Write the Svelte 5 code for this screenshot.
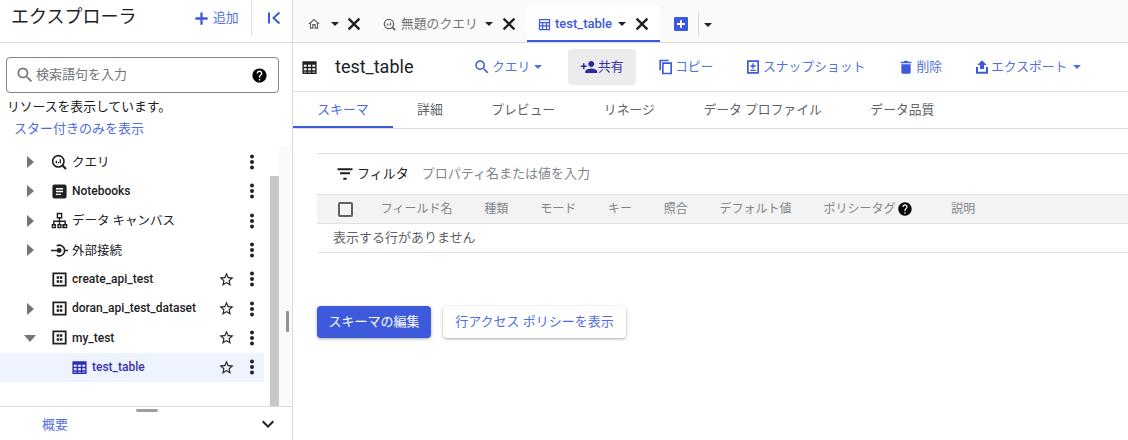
<script>
  const P = {
    search: 'M15.5 14h-.79l-.28-.27A6.471 6.471 0 0 0 16 9.5 6.5 6.5 0 1 0 9.5 16c1.61 0 3.09-.59 4.23-1.57l.27.28v.79l5 4.99L20.49 19l-4.99-5zm-6 0C7.01 14 5 11.99 5 9.5S7.01 5 9.5 5 14 7.01 14 9.5 11.99 14 9.5 14z',
    help: 'M12 2C6.48 2 2 6.48 2 12s4.48 10 10 10 10-4.48 10-10S17.52 2 12 2zm1 17h-2v-2h2v2zm2.07-7.75l-.9.92C13.45 12.9 13 13.5 13 15h-2v-.5c0-1.1.45-2.1 1.17-2.83l1.24-1.26c.37-.36.59-.86.59-1.41 0-1.1-.9-2-2-2s-2 .9-2 2H8c0-2.21 1.79-4 4-4s4 1.79 4 4c0 .88-.36 1.68-.93 2.25z',
    star: 'M22 9.24l-7.19-.62L12 2 9.19 8.63 2 9.24l5.46 4.73L5.82 21 12 17.27 18.18 21l-1.63-7.03L22 9.24zM12 15.4l-3.76 2.27 1-4.28-3.32-2.88 4.38-.38L12 6.1l1.71 4.04 4.38.38-3.32 2.88 1 4.28L12 15.4z',
    close: 'M19.500 6.500L17.500 4.500 12 10 6.500 4.500 4.500 6.500 10 12 4.500 17.500 6.500 19.500 12 14 17.500 19.500 19.500 17.500 14 12z',
    home: 'M12 5.69l5 4.5V18h-2v-6H9v6H7v-7.81l5-4.5M12 3L2 12h3v8h6v-6h2v6h6v-8h3L12 3z',
    share: 'M15 12c2.21 0 4-1.79 4-4s-1.79-4-4-4-4 1.79-4 4 1.79 4 4 4zm-9-2V7H4v3H1v2h3v3h2v-3h3v-2H6zm9 4c-2.67 0-8 1.34-8 4v2h16v-2c0-2.66-5.33-4-8-4z',
    copy: 'M16 1H2v16h2.500V3.500H16V1zm5 4H6v18h15V5zm-2.500 15.500h-10v-13h10v13z',
    snap: 'M3 2h18v20H3V2zm2.500 2.500v15h13v-15h-13zM11 6.500h2V9.500h3v2h-3v3h-2v-3H8v-2h3v-3zM8 16h8v2H8v-2z',
    trash: 'M5 8h14v12c0 1.1-.9 2-2 2H7c-1.1 0-2-.9-2-2V8zM4 4h5l1-1.500h4L15 4h5v2.500H4V4z',
    upload: 'M9 15h6V9h4l-7-7-7 7h4zM3 22V12h3v7h12v-7h3v10z',
    filter: 'M10 19h4v-2.500h-4V19zM3 5v2.500h18V5H3zm3 7.300h12v-2.500H6v2.500z',
    chevron: 'M16.59 8.59L12 13.17 7.41 8.59 6 10l6 6 6-6z',
    add: 'M19 13.300h-5.700V19h-2.600v-5.700H5v-2.600h5.700V5h2.600v5.700H19v2.600z',
    table: 'M2 3h20v18H2V3zm2 5v3h4V8H4zm6 0v3h4V8h-4zm6 0v3h4V8h-4zM4 13v3h4v-3H4zm6 0v3h4v-3h-4zm6 0v3h4v-3h-4z M4 18v1h4v-1H4zm6 0v1h4v-1h-4zm6 0v1h4v-1h-4z',
    tableLine: 'M3 3h18v18H3V3zm2 2v3h14V5H5zm0 5v3h3v-3H5zm5 0v3h4v-3h-4zm6 0v3h3v-3h-3zM5 15v4h3v-4H5zm5 0v4h4v-4h-4zm6 0v4h3v-4h-3z',
    notebook: 'M5 2h14a3 3 0 0 1 3 3v14a3 3 0 0 1-3 3H5a3 3 0 0 1-3-3V5a3 3 0 0 1 3-3zm2 5v2h10V7H7zm0 4v2h10v-2H7zm0 4v2h7v-2H7z',
    canvas: 'M8 1h8v8h-3v3h8v5h2v6h-7v-6h3v-3h-6v3h2v6H9v-6h2v-3H5v3h2v6H1v-6h2v-5h8V9H8V1zm2 2v4h4V3h-4zM3 19v2h2v-2H3zm8 0v2h2v-2h-2zm8 0v2h2v-2h-2z',
    dataset: 'M2 2h20v20H2V2zm2.500 2.500v15h15v-15h-15zM8 7.500h3.500V11H8V7.500zm4.500 0H16V11h-3.500V7.500zM8 13h3.500v3.500H8V13zm4.500 0H16v3.500h-3.500V13z'
  };
  const tree = [
    { name: 'クエリ', kind: 'query', arrow: 'right' },
    { name: 'Notebooks', icon: 'notebook', arrow: 'right' },
    { name: 'データ キャンバス', icon: 'canvas', arrow: 'right' },
    { name: '外部接続', kind: 'conn', arrow: 'right' },
    { name: 'create_api_test', icon: 'dataset', star: true },
    { name: 'doran_api_test_dataset', icon: 'dataset', star: true, arrow: 'right' },
    { name: 'my_test', icon: 'dataset', star: true, arrow: 'down' },
    { name: 'test_table', icon: 'table', star: true, child: true, selected: true }
  ];
  const actions = [
    { label: 'コピー', icon: 'copy', w: 'copy' },
    { label: 'スナップショット', icon: 'snap', w: 'snap' },
    { label: '削除', icon: 'trash', w: 'del' },
    { label: 'エクスポート', icon: 'upload', w: 'exp', caret: true }
  ];
  const subtabs = ['スキーマ', '詳細', 'プレビュー', 'リネージ', 'データ プロファイル', 'データ品質'];
  const cols = ['フィールド名', '種類', 'モード', 'キー', '照合', 'デフォルト値'];
</script>

{#snippet ic(name, size)}
  <svg class="ic" width={size} height={size} viewBox="0 0 24 24" fill="currentColor"><path fill-rule="evenodd" d={P[name]} /></svg>
{/snippet}
{#snippet queryIcon(size)}
  <svg class="ic" width={size} height={size} viewBox="0 0 24 24" fill="none" stroke="currentColor" stroke-width="2.400">
    <circle cx="11" cy="11" r="8.500" /><path d="M17 17l5.500 5.500" stroke-width="3.200" /><path d="M8 10v4M11 12v2M14 8v6" stroke-width="2" />
  </svg>
{/snippet}
{#snippet connIcon(size)}
  <svg class="ic" width={size} height={size} viewBox="0 0 24 24" fill="none" stroke="currentColor" stroke-width="2.200">
    <path d="M0 12h11M19 12h5M8 5.500a7.500 7.500 0 1 1 0 13" /><circle cx="11.500" cy="12" r="3.400" fill="currentColor" stroke="none" />
  </svg>
{/snippet}
{#snippet caret()}
  <span class="caret"></span>
{/snippet}
{#snippet dots()}
  <svg class="dots" width="6" height="16" viewBox="0 0 6 16" fill="currentColor"><circle cx="3" cy="2.500" r="2" /><circle cx="3" cy="8" r="2" /><circle cx="3" cy="13.500" r="2" /></svg>
{/snippet}

<div class="page">
  <aside class="side">
    <header class="side-head">
      <h1>エクスプローラ</h1>
      <button class="add">{@render ic('add', 21)}<span>追加</span></button>
      <span class="side-div"></span>
      <svg class="collapse" width="14" height="14" viewBox="0 0 14 14" fill="none" stroke="currentColor" stroke-width="2"><path d="M2 1.500v11M12.500 1.500L6.500 7l6 5.500" /></svg>
    </header>
    <div class="search">
      <span class="s-ic">{@render ic('search', 20)}</span>
      <span class="s-ph">検索語句を入力</span>
      <span class="black">{@render ic('help', 17)}</span>
    </div>
    <p class="note">リソースを表示しています。</p>
    <p class="starred">スター付きのみを表示</p>
    <div class="tree-wrap">
      <div class="tree">
        {#each tree as r}
          <div class="row" class:sel={r.selected} class:child={r.child}>
            <span class="arrow {r.arrow ?? ''}"></span>
            <span class="t-ic">
              {#if r.kind === 'query'}{@render queryIcon(16)}{:else if r.kind === 'conn'}{@render connIcon(17)}{:else}{@render ic(r.icon, 17)}{/if}
            </span>
            <span class="t-name">{r.name}</span>
            <span class="t-star">{#if r.star}{@render ic('star', 17)}{/if}</span>
            <span class="t-more">{@render dots()}</span>
          </div>
        {/each}
      </div>
      <div class="vbar"><span class="vthumb"></span></div>
      <div class="gutter"><span class="gthumb"></span></div>
    </div>
    <footer class="side-foot">
      <span class="grip"></span>
      <span class="foot-label">概要</span>
      {@render ic('chevron', 24)}
    </footer>
  </aside>

  <main class="main">
    <nav class="tabs">
      <div class="tab home">
        <span class="gray">{@render ic('home', 14)}</span>{@render caret()}<span class="x">{@render ic('close', 20)}</span>
      </div>
      <div class="tab query">
        <span class="gray">{@render queryIcon(13)}</span><span class="tab-t">無題のクエリ</span>{@render caret()}<span class="x">{@render ic('close', 20)}</span>
      </div>
      <div class="tab active">
        {@render ic('tableLine', 15)}<span class="tab-t">test_table</span>{@render caret()}<span class="x">{@render ic('close', 20)}</span>
      </div>
      <span class="newtab"><svg width="14" height="14" viewBox="0 0 14 14"><rect width="14" height="14" rx="1" fill="#3c5adb" /><path d="M6 3h2v3h3v2H8v3H6V8H3V6h3z" fill="#fff" /></svg></span>
      <span class="tabs-div"></span>
      {@render caret()}
    </nav>

    <section class="bar">
      <span class="bar-ic">{@render ic('table', 17)}</span>
      <h2>test_table</h2>
      <button class="act q">{@render ic('search', 18)}<span>クエリ</span>{@render caret()}</button>
      <button class="act share">{@render ic('share', 18)}<span>共有</span></button>
      {#each actions as a}
        <button class="act {a.w}">{@render ic(a.icon, 16)}<span>{a.label}</span>{#if a.caret}{@render caret()}{/if}</button>
      {/each}
    </section>

    <nav class="subtabs">
      {#each subtabs as t, i}
        <span class="sub" class:on={i === 0}>{t}</span>
      {/each}
    </nav>

    <section class="content">
      <div class="filter">
        {@render ic('filter', 20)}
        <span class="f-l">フィルタ</span>
        <span class="f-p">プロパティ名または値を入力</span>
      </div>
      <div class="thead">
        <span class="cb"></span>
        {#each cols as c}<span>{c}</span>{/each}
        <span class="pol">ポリシータグ {@render ic('help', 16)}</span>
        <span>説明</span>
      </div>
      <div class="empty">表示する行がありません</div>
      <div class="btns">
        <button class="btn pri">スキーマの編集</button>
        <button class="btn sec">行アクセス ポリシーを表示</button>
      </div>
    </section>
  </main>
</div>

<style>
  :global(body) { margin: 0; background: #fff; }
  * { box-sizing: border-box; }
  .page {
    display: flex; width: 1128px; height: 440px; overflow: hidden;
    font: 12.800px/1.2 Roboto, "Noto Sans CJK JP", sans-serif; color: #202124;
  }
  button { font: inherit; border: 0; background: none; padding: 0; display: flex; align-items: center; }
  h1, h2, p { margin: 0; font-weight: 400; }
  .ic { display: block; flex: none; }
  .black { color: #000; }

  .side { width: 293px; height: 440px; flex: none; display: flex; flex-direction: column; border-right: 1px solid #dadce0; }
  .side-head { height: 43px; flex: none; display: flex; align-items: flex-start; padding: 0 0 0 11px; border-bottom: 1px solid #dadce0; }
  .side-head h1 { font-size: 18px; line-height: 34px; width: 180px; color: #202124; }
  .add { color: #3c5adb; height: 36px; gap: 1px; margin-left: 0; width: 60px; }
  .add span { color: #5470de; }
  .side-div { width: 1px; height: 36px; background: #e0e0e0; }
  .collapse { color: #3c5adb; margin: 11px 0 0 15px; }

  .search { margin: 14px 13px 0 6px; height: 36px; flex: none; border: 1px solid #80868b; border-radius: 4px; display: flex; align-items: center; padding: 0 10px 0 8px; font-size: 13px; }
  .s-ic { color: #70757a; }
  .s-ph { flex: 1; margin-left: 1px; color: #70757a; }
  .note { margin: 5px 0 0 7px; line-height: 17px; color: #202124; }
  .starred { margin: 5px 0 0 14px; line-height: 17px; color: #4f6ddf; font-size: 13px; }

  .tree-wrap { flex: 1; min-height: 0; display: flex; margin-top: 10px; }
  .tree { width: 270px; flex: none; padding-top: 0.500px; }
  .row { height: 29.300px; width: 264px; display: flex; align-items: center; font-weight: 500; font-size: 12px; color: #202124; }
  .row.sel { background: #edf4fe; color: #3730b0; }
  .row.sel .t-ic { color: #2f2fb5; }
  .row.sel .t-star, .row.sel .t-more { color: #202124; }
  .arrow { width: 51px; flex: none; height: 12px; position: relative; }
  .arrow.right::before { content: ''; position: absolute; left: 27px; top: 0; border-left: 7px solid #757575; border-top: 6px solid transparent; border-bottom: 6px solid transparent; }
  .arrow.down::before { content: ''; position: absolute; left: 24px; top: 3px; border-top: 7px solid #757575; border-left: 6.500px solid transparent; border-right: 6.500px solid transparent; }
  .row.child .arrow { width: 71px; }
  .t-ic { width: 21px; flex: none; }
  .t-name { flex: 1; min-width: 0; white-space: nowrap; }
  .row:nth-child(1) .t-name, .row:nth-child(3) .t-name, .row:nth-child(4) .t-name { font-weight: 400; font-size: 12.500px; }
  .t-star { width: 17px; flex: none; margin-right: 14px; }
  .t-more { width: 6px; flex: none; margin-right: 9px; }
  .dots { display: block; }
  .vbar { width: 9px; flex: none; padding-top: 29px; }
  .vthumb { display: block; height: 100%; background: #c8c8c8; }
  .gutter { flex: 1; background: #fafafa; padding: 164px 0 0 7px; }
  .gthumb { display: block; width: 3px; height: 21px; background: #8f9499; border-radius: 1px; }

  .side-foot { height: 34px; flex: none; border-top: 1px solid #dadce0; display: flex; align-items: center; padding: 0 12px 0 42px; position: relative; }
  .grip { position: absolute; left: 136px; top: 2px; width: 22px; height: 3px; background: #9aa0a6; border-radius: 2px; }
  .foot-label { flex: 1; color: #5470de; padding-top: 2px; font-size: 13px; }

  .main { flex: 1; min-width: 0; display: flex; flex-direction: column; }
  .tabs { height: 43px; flex: none; display: flex; align-items: flex-end; background: #fafafa; border-bottom: 1px solid #dadce0; padding-left: 14px; }
  .tab { height: 36px; display: flex; align-items: center; flex: none; }
  .gray { color: #5f6368; }
  .tab .x { color: #202124; }
  .tab-t { margin-left: 5px; }
  .tab .caret { border-top-color: #202124; }
  .home { width: 61px; }
  .home .caret { margin-left: 10px; }
  .home .x { margin-left: 5px; }
  .query { width: 159px; padding-left: 15px; color: #757575; }
  .query .caret { margin-left: 7px; }
  .query .x { margin-left: 6px; }
  .active { width: 133px; padding: 2px 0 0 10px; background: #fff; border-radius: 4px 4px 0 0; color: #3c5adb; border-bottom: 2px solid #3c5adb; }
  .active .tab-t { font-weight: 500; font-size: 13px; margin-left: 3px; }
  .active .caret { margin-left: 6px; }
  .active .x { margin-left: 6px; }
  .newtab { margin: 0 0 11px 14px; height: 14px; }
  .tabs-div { width: 1px; height: 24px; background: #dadce0; margin: 0 5px 6px 10px; }
  .tabs > .caret { margin-bottom: 15px; border-top-color: #202124; }
  .caret { display: block; flex: none; width: 0; height: 0; border-top: 4px solid currentColor; border-left: 4px solid transparent; border-right: 4px solid transparent; }

  .bar { height: 49px; flex: none; display: flex; align-items: center; border-bottom: 1px solid #dadce0; padding-left: 8px; }
  .bar-ic { width: 34px; color: #202124; }
  .bar h2 { font-size: 18px; width: 138px; color: #202124; }
  .act { height: 36px; color: #3c5adb; gap: 2px; flex: none; }
  .act span { color: #5470de; }
  .q { width: 95px; gap: 1px; }
  .q .caret { margin-left: 3px; }
  .share { width: 68px; padding-left: 12px; background: #ececec; border-radius: 4px; gap: 0; color: #2a2a9a; }
  .share span { color: #3730a8; }
  .copy { margin-left: 22px; width: 87px; gap: 1px; }
  .snap { width: 153px; }
  .del { width: 76px; gap: 2.500px; }
  .exp { gap: 1px; }
  .exp .caret { margin-left: 5px; }

  .subtabs { height: 37px; flex: none; display: flex; border-bottom: 1px solid #dadce0; }
  .sub { padding: 0 24.300px; line-height: 35px; color: #5f6368; white-space: nowrap; }
  .sub.on { color: #4f6ddf; border-bottom: 2px solid #3c5adb; height: 36px; }

  .content { padding: 24px 0 0 24px; flex: 1; font-size: 13px; }
  .filter { height: 41px; border-top: 1px solid #e0e0e0; display: flex; align-items: center; padding-left: 18px; }
  .f-l { margin-left: 2px; color: #202124; }
  .f-p { margin-left: 13px; color: #80868b; }
  .thead { height: 30px; background: #f3f3f3; border-top: 1px solid #e0e0e0; border-bottom: 1px solid #e0e0e0; display: flex; align-items: center; gap: 31.800px; padding-left: 21px; font-size: 12px; color: #80868b; white-space: nowrap; }
  .cb { width: 15px; height: 15px; border: 2px solid #5f6368; border-radius: 2px; margin-right: -4px; }
  .pol { display: flex; align-items: center; gap: 2px; margin-right: 6px; }
  .pol :global(svg) { color: #000; }
  .empty { height: 29px; border-bottom: 1px solid #e0e0e0; padding-left: 16px; line-height: 28px; color: #5f6368; }
  .btns { display: flex; gap: 12px; margin-top: 53px; }
  .btn { height: 32px; border-radius: 4px; justify-content: center; box-shadow: 0 1px 3px rgba(60,64,67,.45); font-size: 13px; }
  .pri { width: 114px; background: #3c5adb; color: #fff; }
  .sec { width: 183px; background: #fff; color: #4f6ddf; }
</style>
